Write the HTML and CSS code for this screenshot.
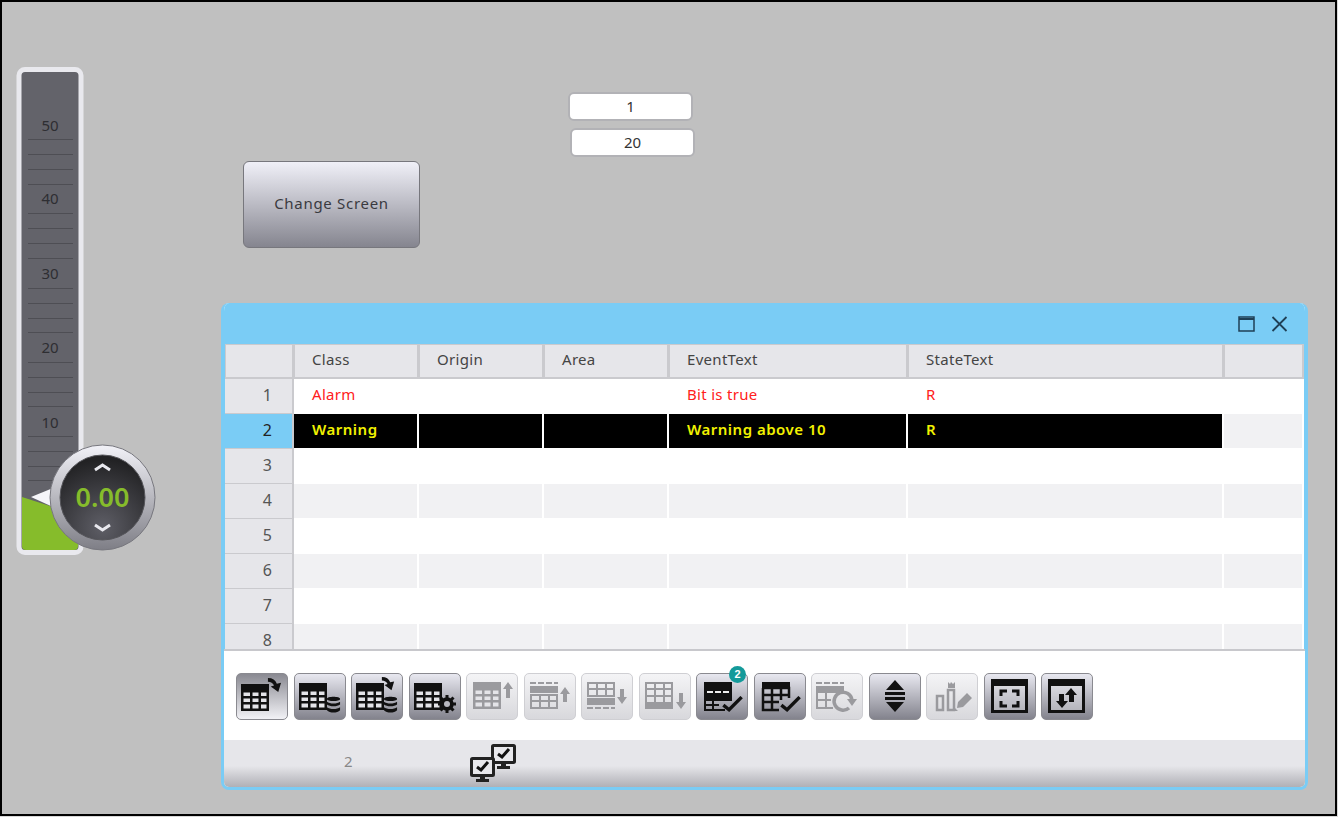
FILE: index.html
```html
<!DOCTYPE html>
<html lang="en">
<head>
    <meta charset="UTF-8">
    <meta name="viewport" content="width=device-width, initial-scale=1.0">
    <title>HMI Screen</title>
    <link rel="stylesheet" href="styles.css">
</head>
<body>
    <svg class="defs" width="0" height="0">
        <defs>
            <symbol id="grid" viewBox="0 0 28 27">
                <rect width="28" height="27" fill="currentColor"/>
                <path fill="#e4e4e8" d="M2.500 8.500h6.500v3.500H2.500zM11.500 8.500h6v3.500h-6zM20 8.500h5.500v3.500H20zM2.500 14.500h6.500v3.500H2.500zM11.500 14.500h6v3.500h-6zM20 14.500h5.500v3.500H20zM2.500 20.500h6.500v4H2.500zM11.500 20.500h6v4h-6zM20 20.500h5.500v4H20z"/>
            </symbol>
            <symbol id="db" viewBox="0 0 16 18">
                <path fill="currentColor" d="M1 3c0-3 14-3 14 0s-14 3-14 0zM1 6c3 2.500 11 2.500 14 0v3c-3 2.500-11 2.500-14 0zM1 12c3 2.500 11 2.500 14 0v3c-3 3.500-11 3.500-14 0z"/>
            </symbol>
            <symbol id="curve" viewBox="0 0 16 16">
                <path fill="currentColor" d="M1 0c5 0 8 2 9.500 6L15 5l-3 10-8-6 3.500-1C6.500 5.500 4 4 1 4z"/>
            </symbol>
            <symbol id="check" viewBox="0 0 18 14">
                <path fill="none" stroke="currentColor" stroke-width="3" d="M1 8l5 4L17 1"/>
            </symbol>
            <symbol id="monitor" viewBox="0 0 25 26">
                <rect x="1.500" y="1.500" width="22" height="17" rx="1" fill="#e8e8ec" stroke="#222" stroke-width="3"/>
                <path fill="#222" d="M10 19h5v3h4v3H6v-3h4z"/>
                <path fill="none" stroke="#111" stroke-width="3" d="M7 10l4 3 7-8"/>
            </symbol>
        </defs>
    </svg>

    <main class="screen">
        <svg class="gauge" width="150" height="500" viewBox="0 0 150 500">
            <defs>
                <radialGradient id="dial-face" cx="50%" cy="85%" r="80%">
                    <stop offset="0" stop-color="#5e5e66"/>
                    <stop offset="1" stop-color="#222224"/>
                </radialGradient>
                <linearGradient id="dial-ring" x1="0" y1="0" x2="0" y2="1">
                    <stop offset="0" stop-color="#f2f2f8"/>
                    <stop offset="1" stop-color="#7e7e86"/>
                </linearGradient>
            </defs>
            <rect x="4" y="3.500" width="62" height="483" rx="6" fill="#63636a" stroke="#e9e9ee" stroke-width="5"/>
            <path class="gauge-ticks" d="M13 73.500h45M13 88.500h45M13 103.500h45M13 118.500h45M13 147.500h45M13 162.500h45M13 177.500h45M13 192.500h45M13 222.500h45M13 237.500h45M13 252.500h45M13 266.500h45M13 296.500h45M13 311.500h45M13 326.500h45M13 340.500h45M13 370.500h45M13 385.500h45M13 400.500h45M13 414.500h45"/>
            <text class="gauge-label" x="35" y="65">50</text>
            <text class="gauge-label" x="35" y="138">40</text>
            <text class="gauge-label" x="35" y="213">30</text>
            <text class="gauge-label" x="35" y="287">20</text>
            <text class="gauge-label" x="35" y="362">10</text>
            <path fill="#86bc2b" d="M7 431 L63 449 V480 a4 4 0 0 1 -4 4 H11 a4 4 0 0 1 -4 -4z"/>
            <path fill="#f6f6fa" d="M16 431 L38 422 V441z"/>
            <circle cx="87.500" cy="431.500" r="52.500" fill="url(#dial-ring)" stroke="#77777e"/>
            <circle cx="87.500" cy="431.500" r="42.500" fill="url(#dial-face)" stroke="#55555a" stroke-width="1"/>
            <path class="dial-chevron" d="M80 404l7.500-5 7.500 5M80 459l7.500 5 7.500-5"/>
            <text class="dial-value" x="87.500" y="441">0.00</text>
        </svg>

        <div class="field field-one">1</div>
        <div class="field field-two">20</div>
        <button class="change-btn" type="button">Change Screen</button>

        <section class="alarm-window">
            <div class="title-bar">
                <svg width="17" height="16" viewBox="0 0 17 16"><path fill="none" stroke="#1f3f55" stroke-width="1.500" d="M1 1h15v14H1z"/><path stroke="#1f3f55" stroke-width="2" d="M1 3h15"/></svg>
                <svg width="17" height="16" viewBox="0 0 17 16"><path fill="none" stroke="#1f3f55" stroke-width="1.800" d="M1.500 1l14 14M15.500 1l-14 14"/></svg>
            </div>
            <div class="table-wrap">
                <table class="alarm-table">
                    <colgroup>
                        <col class="col-num"><col class="col-class"><col class="col-class"><col class="col-class"><col class="col-event"><col class="col-state"><col>
                    </colgroup>
                    <thead>
                        <tr><th></th><th>Class</th><th>Origin</th><th>Area</th><th>EventText</th><th>StateText</th><th></th></tr>
                    </thead>
                    <tbody>
                        <tr class="row-alarm"><th>1</th><td>Alarm</td><td></td><td></td><td>Bit is true</td><td>R</td><td class="filler"></td></tr>
                        <tr class="row-warning"><th>2</th><td>Warning</td><td></td><td></td><td>Warning above 10</td><td>R</td><td class="filler"></td></tr>
                        <tr><th>3</th><td></td><td></td><td></td><td></td><td></td><td></td></tr>
                        <tr><th>4</th><td></td><td></td><td></td><td></td><td></td><td></td></tr>
                        <tr><th>5</th><td></td><td></td><td></td><td></td><td></td><td></td></tr>
                        <tr><th>6</th><td></td><td></td><td></td><td></td><td></td><td></td></tr>
                        <tr><th>7</th><td></td><td></td><td></td><td></td><td></td><td></td></tr>
                        <tr><th>8</th><td></td><td></td><td></td><td></td><td></td><td></td></tr>
                    </tbody>
                </table>
            </div>
            <div class="toolbar">
                <button class="tool tool-pressed" type="button">
                    <svg viewBox="0 0 52 47"><use href="#grid" x="5" y="11" width="28" height="27"/><use href="#curve" x="31" y="5" width="15" height="15"/></svg>
                </button>
                <button class="tool" type="button">
                    <svg viewBox="0 0 52 47"><use href="#grid" x="5" y="10" width="28" height="27"/><use href="#db" x="32" y="23" width="15" height="17"/></svg>
                </button>
                <button class="tool" type="button">
                    <svg viewBox="0 0 52 47"><use href="#grid" x="5" y="10" width="28" height="27"/><use href="#curve" x="30" y="4" width="14" height="14"/><use href="#db" x="32" y="23" width="15" height="17"/></svg>
                </button>
                <button class="tool" type="button">
                    <svg viewBox="0 0 52 47"><use href="#grid" x="5" y="10" width="28" height="27"/><circle cx="38" cy="31" r="5" fill="none" stroke="currentColor" stroke-width="3.500"/><path stroke="currentColor" stroke-width="3" d="M38 22v18M29 31h18M31.500 24.500l13 13M44.500 24.500l-13 13"/><circle cx="38" cy="31" r="3" fill="#b8b8c0"/></svg>
                </button>
                <button class="tool" type="button" disabled>
                    <svg viewBox="0 0 52 47"><use href="#grid" x="7" y="9" width="28" height="27"/><path fill="currentColor" d="M42 9l5 7h-3v9h-4v-9h-3z"/></svg>
                </button>
                <button class="tool" type="button" disabled>
                    <svg viewBox="0 0 52 47"><path stroke="currentColor" stroke-width="2" stroke-dasharray="6 2" d="M6 10h28"/><rect x="6" y="13" width="28" height="7" fill="currentColor"/><path fill="none" stroke="currentColor" stroke-width="2" d="M7 22h26v13H7zM16 22v13M25 22v13M7 28h26"/><path fill="currentColor" d="M41 14l5 7h-3v8h-4v-8h-3z"/></svg>
                </button>
                <button class="tool" type="button" disabled>
                    <svg viewBox="0 0 52 47"><path fill="none" stroke="currentColor" stroke-width="2" d="M7 10h26v13H7zM16 10v13M25 10v13M7 16h26"/><rect x="6" y="25" width="28" height="7" fill="currentColor"/><path stroke="currentColor" stroke-width="2" stroke-dasharray="6 2" d="M6 35h28"/><path fill="currentColor" d="M41 31l-5-7h3v-8h4v8h3z"/></svg>
                </button>
                <button class="tool" type="button" disabled>
                    <svg viewBox="0 0 52 47"><path fill="none" stroke="currentColor" stroke-width="2" d="M7 10h26v20H7zM16 10v20M25 10v20M7 16h26M7 23h26"/><rect x="6" y="29" width="28" height="7" fill="currentColor"/><path fill="currentColor" d="M42 36l-5-7h3v-9h4v9h3z"/></svg>
                </button>
                <button class="tool tool-badged" type="button">
                    <svg viewBox="0 0 52 47"><rect x="8" y="9" width="28" height="19" fill="currentColor"/><path stroke="#eee" stroke-width="2" stroke-dasharray="6 2" d="M11 19h22"/><path fill="none" stroke="currentColor" stroke-width="2" d="M9 28v9h20M17 28v9M9 32h14"/><use href="#check" x="26" y="23" width="21" height="16"/></svg>
                    <span class="badge">2</span>
                </button>
                <button class="tool" type="button">
                    <svg viewBox="0 0 52 47"><rect x="8" y="9" width="28" height="7" fill="currentColor"/><path fill="none" stroke="currentColor" stroke-width="2.500" d="M9 15h26v10M9 15v22h16M18 15v22M27 15v12M9 22h26M9 29h16"/><use href="#check" x="26" y="23" width="21" height="16"/></svg>
                </button>
                <button class="tool" type="button" disabled>
                    <svg viewBox="0 0 52 47"><path stroke="currentColor" stroke-width="2" stroke-dasharray="6 2" d="M5 10h28"/><rect x="5" y="13" width="28" height="7" fill="currentColor"/><path fill="none" stroke="currentColor" stroke-width="2" d="M6 20v15h16M15 20v15M6 27h14"/><path fill="none" stroke="currentColor" stroke-width="3.500" d="M41 27a9 9 0 1 0-3 8"/><path fill="currentColor" d="M36 26h10l-5 7z"/></svg>
                </button>
                <button class="tool" type="button">
                    <svg viewBox="0 0 52 47"><path fill="currentColor" d="M26 7l9 10H17zM16 19h20v3H16zM16 24h20v3H16zM17 29h18l-9 10z"/></svg>
                </button>
                <button class="tool" type="button" disabled>
                    <svg viewBox="0 0 52 47"><path fill="none" stroke="currentColor" stroke-width="2.500" d="M11 23h6v14h-6zM22 17h6v20h-6z"/><path fill="currentColor" d="M22 9l2 2 1-2 2 2 2-2v6h-7zM31 35l1-6 9-9 5 5-9 9zM27 33l5 5h-5z"/></svg>
                </button>
                <button class="tool" type="button">
                    <svg viewBox="0 0 52 47"><rect x="8.500" y="7.500" width="34" height="31" fill="#eeeef2" fill-opacity=".35" stroke="currentColor" stroke-width="3"/><rect x="8" y="7" width="35" height="6" fill="currentColor"/><path fill="none" stroke="currentColor" stroke-width="3" d="M17 23v-5h6M28 18h6v5M34 28v5h-6M23 33h-6v-5"/></svg>
                </button>
                <button class="tool" type="button">
                    <svg viewBox="0 0 52 47"><rect x="8.500" y="7.500" width="34" height="31" fill="#eeeef2" fill-opacity=".35" stroke="currentColor" stroke-width="3"/><rect x="8" y="7" width="35" height="6" fill="currentColor"/><path fill="currentColor" d="M30 15l6 7h-3v7h-5v-7h-4zM21 35l-6-7h3v-7h5v7h4z"/></svg>
                </button>
            </div>
            <footer class="status-bar">
                <span class="status-count">2</span>
                <svg class="status-icon status-icon-back" width="25" height="26"><use href="#monitor"/></svg>
                <svg class="status-icon status-icon-front" width="25" height="26"><use href="#monitor"/></svg>
            </footer>
        </section>
    </main>
</body>
</html>
```

FILE: styles.css
```css
html, body {
    margin: 0;
    padding: 0;
}
body {
    background-color: #d8d8d8;
    font-family: 'Noto Sans', 'Open Sans', sans-serif;
    color: #444;
}
.defs {
    position: absolute;
}
.screen {
    position: relative;
    box-sizing: border-box;
    width: 1337px;
    height: 816px;
    background-color: #c0c0c0;
    border: 2px solid #000;
    overflow: hidden;
}

/* widgets sit on a free HMI canvas, so they keep their own coordinates */
.gauge {
    position: absolute;
    left: 13px;
    top: 64px;
}
.gauge-ticks {
    stroke: #4e4e54;
    stroke-width: 1;
    fill: none;
}
.gauge-label {
    font-size: 15px;
    fill: #2e2e32;
    text-anchor: middle;
}
.dial-chevron {
    fill: none;
    stroke: #e8e8ee;
    stroke-width: 3;
}
.dial-value {
    font-size: 27px;
    font-weight: 600;
    fill: #86bc2b;
    text-anchor: middle;
}
.field {
    position: absolute;
    box-sizing: border-box;
    width: 125px;
    height: 29px;
    line-height: 25px;
    text-align: center;
    font-size: 15px;
    color: #333;
    background-color: #fff;
    border: 2px solid #b2b2b6;
    border-radius: 6px;
}
.field-one {
    left: 566px;
    top: 90px;
}
.field-two {
    left: 568px;
    top: 126px;
}
.change-btn {
    position: absolute;
    left: 241px;
    top: 159px;
    box-sizing: border-box;
    width: 177px;
    height: 87px;
    padding: 0 0 3px;
    font-family: inherit;
    font-size: 15px;
    letter-spacing: 0.7px;
    color: #3a3a40;
    background: linear-gradient(#f0f0f8, #85858f);
    border: 1.500px solid #77777d;
    border-radius: 6px;
}

.alarm-window {
    position: absolute;
    left: 219px;
    top: 301px;
    box-sizing: border-box;
    width: 1087px;
    height: 487px;
    display: flex;
    flex-direction: column;
    background-color: #fff;
    border: solid #7accf5;
    border-width: 0 3px 3px;
    border-radius: 8px;
    overflow: hidden;
}
.title-bar {
    height: 41px;
    flex: none;
    display: flex;
    align-items: center;
    justify-content: flex-end;
    gap: 16px;
    padding-right: 17px;
    background-color: #7accf5;
}
.table-wrap {
    height: 307px;
    flex: none;
    overflow: hidden;
    padding: 0 1px;
    background-color: #7accf5;
    border-bottom: 2px solid #c8c8cc;
    box-sizing: border-box;
}
.alarm-table {
    width: 100%;
    table-layout: fixed;
    border-collapse: separate;
    border-spacing: 0;
    font-size: 15px;
    letter-spacing: 0.3px;
}
.col-num {
    width: 69px;
}
.col-class {
    width: 125px;
}
.col-event {
    width: 239px;
}
.col-state {
    width: 316px;
}
.alarm-table thead th {
    height: 35px;
    box-sizing: border-box;
    padding: 0 0 4px 17px;
    text-align: left;
    font-weight: 400;
    color: #444;
    background-color: #e6e6ea;
    border: 1px solid #cacace;
    border-width: 1px 1px 2px 1px;
    border-right-width: 2px;
}
.alarm-table tbody th {
    height: 35px;
    padding: 0 0 3px 18px;
    font-size: 16px;
    font-weight: 400;
    color: #555;
    background-color: #e6e6ea;
    border-right: 2px solid #cacace;
    border-bottom: 1px solid #cacace;
    box-sizing: border-box;
}
.alarm-table td {
    height: 35px;
    padding: 0 0 4px 18px;
    box-sizing: border-box;
    background-color: #fff;
    border-right: 2px solid #fff;
    border-bottom: 1px solid #fff;
    white-space: nowrap;
}
.alarm-table tbody tr:nth-child(even) td {
    background-color: #f1f1f3;
}
.row-alarm td {
    color: #ff2020;
}
.alarm-table tbody .row-warning th {
    background-color: #7accf5;
    color: #222;
}
.alarm-table tbody tr.row-warning td {
    background-color: #000;
    color: #f2f200;
    font-weight: 600;
    letter-spacing: 0.5px;
    border-right-color: #fff;
}
.alarm-table tbody tr.row-warning td.filler {
    background-color: #f1f1f3;
}

.toolbar {
    flex: none;
    height: 89px;
    display: flex;
    align-items: flex-start;
    gap: 5.500px;
    padding: 22px 0 0 12px;
    box-sizing: border-box;
}
.tool {
    position: relative;
    flex: none;
    width: 52px;
    height: 47px;
    padding: 0;
    box-sizing: border-box;
    color: #111;
    background: linear-gradient(#e8e8f0, #83838d);
    border: 1px solid #8a8a90;
    border-radius: 5px;
}
.tool svg {
    display: block;
    width: 52px;
    height: 47px;
    margin: -1px;
}
.tool:disabled {
    color: #9a9a9e;
    background: linear-gradient(#f4f4f6, #d8d8dc);
    border-color: #cfcfd3;
}
.tool-pressed {
    background: linear-gradient(#8a8a92, #f2f2f6);
}
.badge {
    position: absolute;
    top: -8px;
    right: 1px;
    width: 17px;
    height: 17px;
    line-height: 17px;
    border-radius: 50%;
    font-size: 11px;
    font-weight: 700;
    color: #fff;
    background-color: #149a9a;
}
.status-bar {
    position: relative;
    flex: 1;
    background: linear-gradient(#e6e6ea 55%, #b0b0b6);
}
.status-count {
    position: absolute;
    left: 120px;
    top: 11px;
    font-size: 15px;
    color: #888;
}
.status-icon {
    position: absolute;
}
.status-icon-back {
    left: 267px;
    top: 4px;
}
.status-icon-front {
    left: 246px;
    top: 17px;
}
```
